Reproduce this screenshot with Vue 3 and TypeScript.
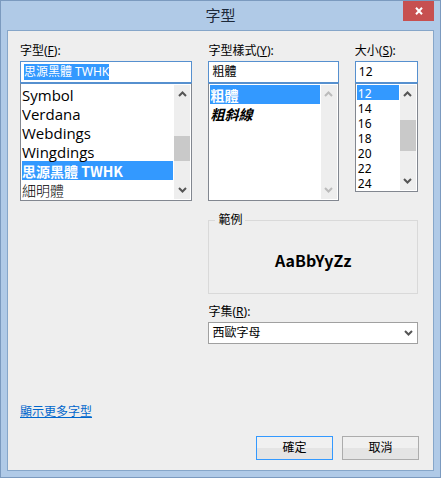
<script setup lang="ts">
import { ref, computed } from 'vue'

interface FontEntry {
  name: string
  bold?: boolean
  light?: boolean
}

const fonts: FontEntry[] = [
  { name: 'Symbol' },
  { name: 'Verdana' },
  { name: 'Webdings' },
  { name: 'Wingdings' },
  { name: '思源黑體 TWHK', bold: true },
  { name: '細明體', light: true },
]
const styles = [
  { name: '粗體', italic: false },
  { name: '粗斜線', italic: true },
]
const sizes = ['12', '14', '16', '18', '20', '22', '24']
const charsets = ['西歐字母']

const font = ref('思源黑體 TWHK')
const fontStyle = ref('粗體')
const size = ref('12')
const charset = ref('西歐字母')
const sampleItalic = computed(() => fontStyle.value === '粗斜線')
</script>

<template>
  <main class="window">
    <header class="titlebar">
      <h1>字型</h1>
      <button class="close" type="button" aria-label="關閉">
        <svg width="8" height="8" viewBox="0 0 8 8"><path d="M1 0.8 7 7.2M7 0.8 1 7.2" /></svg>
      </button>
    </header>
    <form class="client" @submit.prevent>
      <div class="pickers">
        <section class="picker">
          <label for="font">字型(<u>F</u>):</label>
          <div class="field">
            <span class="highlight"><input id="font" v-model="font" class="text selected" type="text" /></span>
          </div>
          <div class="list">
            <select v-model="font" class="large" size="6" aria-label="字型清單">
              <option v-for="f in fonts" :key="f.name" :value="f.name" :class="{ bold: f.bold, light: f.light }">{{ f.name }}</option>
            </select>
            <div class="scroll" aria-hidden="true">
              <svg class="arrow" viewBox="0 0 9 6"><path d="M1 5 4.5 1.5 8 5" /></svg>
              <i class="thumb font-thumb"></i>
              <svg class="arrow" viewBox="0 0 9 6"><path d="M1 1 4.5 4.5 8 1" /></svg>
            </div>
          </div>
        </section>

        <section class="picker">
          <label for="style">字型樣式(<u>Y</u>):</label>
          <div class="field"><input id="style" v-model="fontStyle" class="text" type="text" /></div>
          <div class="list">
            <select v-model="fontStyle" class="large" size="6" aria-label="字型樣式清單">
              <option v-for="s in styles" :key="s.name" :value="s.name" class="bold" :class="{ italic: s.italic }">{{ s.name }}</option>
            </select>
            <div class="scroll disabled" aria-hidden="true">
              <svg class="arrow" viewBox="0 0 9 6"><path d="M1 5 4.5 1.5 8 5" /></svg>
              <svg class="arrow" viewBox="0 0 9 6"><path d="M1 1 4.5 4.5 8 1" /></svg>
            </div>
          </div>
        </section>

        <section class="picker">
          <label for="size">大小(<u>S</u>):</label>
          <div class="field"><input id="size" v-model="size" class="text" type="text" /></div>
          <div class="list">
            <select v-model="size" class="small" size="7" aria-label="大小清單">
              <option v-for="s in sizes" :key="s" :value="s">{{ s }}</option>
            </select>
            <div class="scroll" aria-hidden="true">
              <svg class="arrow" viewBox="0 0 9 6"><path d="M1 5 4.5 1.5 8 5" /></svg>
              <i class="thumb size-thumb"></i>
              <svg class="arrow" viewBox="0 0 9 6"><path d="M1 1 4.5 4.5 8 1" /></svg>
            </div>
          </div>
        </section>

        <section class="details">
          <fieldset>
            <legend>範例</legend>
            <p class="sample" :class="{ italic: sampleItalic }">AaBbYyZz</p>
          </fieldset>
          <label for="charset">字集(<u>R</u>):</label>
          <div class="combo">
            <select id="charset" v-model="charset">
              <option v-for="c in charsets" :key="c">{{ c }}</option>
            </select>
            <svg class="arrow" viewBox="0 0 9 6"><path d="M1 1 4.5 4.5 8 1" /></svg>
          </div>
        </section>
      </div>

      <a class="more" href="#">顯示更多字型</a>

      <footer>
        <button class="primary" type="submit">確定</button>
        <button type="button">取消</button>
      </footer>
    </form>
  </main>
</template>

<style>
body {
  margin: 0;
}
</style>

<style scoped>
* {
  box-sizing: border-box;
}
.window {
  display: flex;
  flex-direction: column;
  min-height: 100vh;
  padding: 0 6px 6px;
  border: 1px solid #7b9abf;
  background: #b0cae7;
  color: #000;
  font: 12px/18px "Noto Sans", "Noto Sans CJK TC", sans-serif;
}
.titlebar {
  display: grid;
  grid-template-columns: 1fr auto 1fr;
  height: 29px;
}
h1 {
  grid-column: 2;
  margin: 0;
  color: #1c2838;
  font: 15px/28px "Noto Sans CJK TC", sans-serif;
}
.close {
  display: flex;
  align-items: center;
  justify-content: center;
  justify-self: end;
  width: 31px;
  height: 20px;
  padding: 0;
  border: 0;
  background: #c75050;
}
svg {
  fill: none;
  stroke: #555;
  stroke-width: 2;
}
.close svg {
  stroke: #fff;
}
.client {
  display: flex;
  flex: 1;
  flex-direction: column;
  padding: 11px 14px 10px 12px;
  border: 1px solid #86a6c9;
  background: #eee;
}
.pickers {
  display: grid;
  grid-template-columns: 172fr 130fr 63fr;
  column-gap: 16px;
  align-items: start;
  padding-right: 1px;
}
.picker {
  min-width: 0;
}
label {
  display: block;
  height: 19px;
}
u {
  text-underline-offset: 1px;
}
input,
select,
button {
  margin: 0;
  border-radius: 0;
  color: inherit;
  font: inherit;
}
.field {
  display: flex;
  align-items: center;
  height: 22px;
  padding: 0 3px;
  border: 1px solid #5690cf;
  background: #fff;
}
.text {
  display: block;
  width: 100%;
  height: 16px;
  padding: 0;
  border: 0;
  outline: 0;
  background: transparent;
}
.highlight {
  display: inline-flex;
  background: #39f;
}
.selected {
  width: auto;
  field-sizing: content;
  color: #fff;
}
.list {
  display: flex;
  padding: 1px;
  border: 1px solid #828790;
  border-top: 1px solid #5690cf;
  background: #fff;
}
.list select {
  flex: 1;
  min-width: 0;
  padding: 0;
  border: 0;
  outline: 0;
  background: #fff;
  overflow: hidden;
}
.large {
  height: 114px;
}
.small {
  height: 105px;
}
.list option {
  min-height: 0;
  padding: 0 1px;
  color: #000;
  line-height: 15px;
}
.large option {
  height: 19px;
  padding: 0;
  font-family: "Open Sans", sans-serif;
  font-size: 15px;
  line-height: 16px;
}
.small option {
  height: 15px;
  line-height: 14px;
}
.list option:checked {
  background: #39f linear-gradient(#39f, #39f);
  color: #fff;
}
.large .bold {
  font-family: "Noto Sans CJK TC", sans-serif;
  font-size: 14px;
  font-weight: 700;
  line-height: 18px;
}
.large .light {
  font-family: "Noto Sans CJK TC", sans-serif;
  font-size: 14px;
  font-weight: 300;
}
.italic {
  font-style: italic;
}
.scroll {
  display: flex;
  flex: none;
  flex-direction: column;
  align-items: center;
  width: 16px;
  padding: 6px 0;
  margin-left: 1px;
  background: #eee;
}
.scroll .arrow:last-child {
  margin-top: auto;
}
.arrow {
  flex: none;
  width: 9px;
  height: 6px;
}
.disabled svg {
  stroke: #bbb;
}
.thumb {
  width: 100%;
  background: #c9c9c9;
}
.font-thumb {
  height: 25px;
  margin-top: 39px;
}
.size-thumb {
  height: 31px;
  margin-top: 23px;
}
.details {
  grid-column: 2 / 4;
  padding-top: 11px;
}
fieldset {
  min-width: 0;
  height: 82px;
  margin: 0 0 9px;
  padding: 0;
  border: 1px solid #d9d9d9;
}
legend {
  margin-left: 6px;
  padding: 0 3px;
  line-height: 16px;
}
.sample {
  margin: 0;
  padding-top: 20px;
  font: 700 16px/24px "Noto Sans CJK TC", sans-serif;
  text-align: center;
}
.sample.italic {
  font-style: italic;
}
.combo {
  display: grid;
  align-items: center;
  height: 22px;
  border: 1px solid #a0a0a0;
  background: #fff;
}
.combo > * {
  grid-area: 1 / 1;
}
.combo select {
  width: 100%;
  height: 20px;
  padding: 0 20px 0 3px;
  border: 0;
  appearance: none;
  background: transparent;
}
.combo .arrow {
  justify-self: end;
  margin-right: 4px;
  pointer-events: none;
}
.more {
  align-self: flex-start;
  margin-top: 59px;
  color: #06c;
}
footer {
  display: flex;
  justify-content: flex-end;
  gap: 9px;
  margin-top: auto;
}
footer button {
  width: 77px;
  height: 24px;
  padding: 0;
  border: 1px solid #acacac;
  background: linear-gradient(#f0f0f0 50%, #e4e4e4 50%);
}
footer .primary {
  border-color: #39f;
}
</style>
